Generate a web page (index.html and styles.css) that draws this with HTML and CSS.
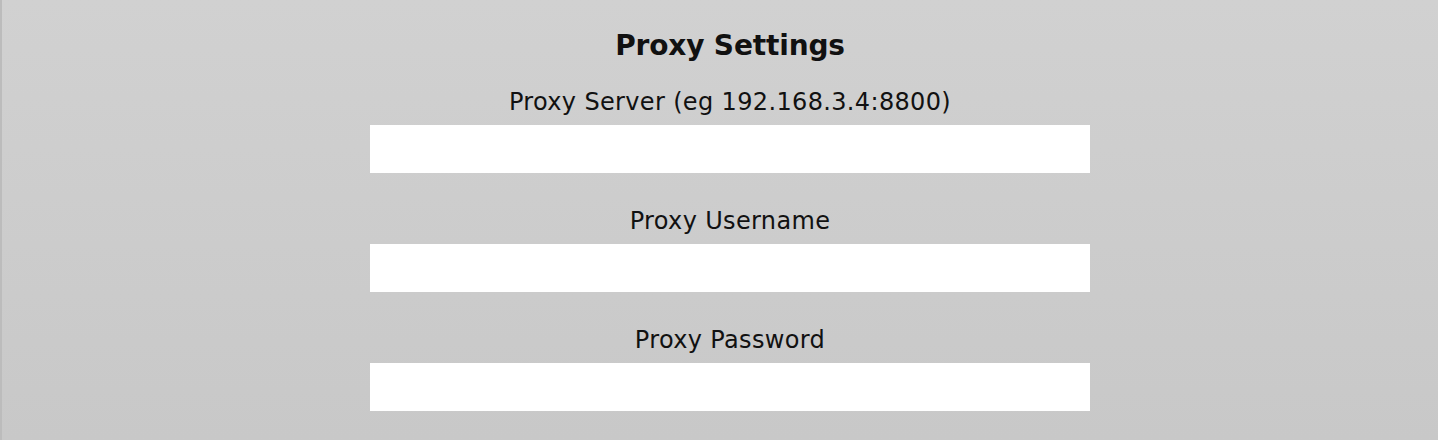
FILE: index.html
```html
<!DOCTYPE html>
<html>
<head>
<meta charset="utf-8">
<link rel="stylesheet" href="styles.css">
</head>
<body>
<div class="panel">
  <h1 class="title">Proxy Settings</h1>
  <div class="field">
    <label class="label">Proxy Server (eg 192.168.3.4:8800)</label>
    <input class="input" type="text">
  </div>
  <div class="field">
    <label class="label">Proxy Username</label>
    <input class="input" type="text">
  </div>
  <div class="field">
    <label class="label">Proxy Password</label>
    <input class="input" type="password">
  </div>
</div>
</body>
</html>
```
FILE: styles.css
```css
html, body {
  margin: 0;
  padding: 0;
  height: 100%;
}
body {
  font-family: "DejaVu Sans", Verdana, sans-serif;
  color: #111;
}
.panel {
  box-sizing: border-box;
  height: 440px;
  border-left: 2px solid #bcbcbc;
  background: linear-gradient(to bottom, #d1d1d1, #c8c8c8);
  display: flex;
  flex-direction: column;
  align-items: center;
  padding-top: 29px;
  padding-left: 20px;
}
.title {
  margin: 0;
  font-size: 28px;
  line-height: 34px;
  font-weight: bold;
  letter-spacing: -0.15px;
  color: #111;
}
.field {
  display: flex;
  flex-direction: column;
  align-items: center;
  margin-top: 34px;
}
.title + .field {
  margin-top: 25px;
}
.label {
  font-size: 24px;
  line-height: 28px;
  letter-spacing: 0.35px;
  margin-bottom: 9px;
}
.input {
  box-sizing: border-box;
  width: 720px;
  height: 48px;
  border: none;
  background: #fff;
  outline: none;
  margin: 0;
  padding: 0 8px;
}
```
